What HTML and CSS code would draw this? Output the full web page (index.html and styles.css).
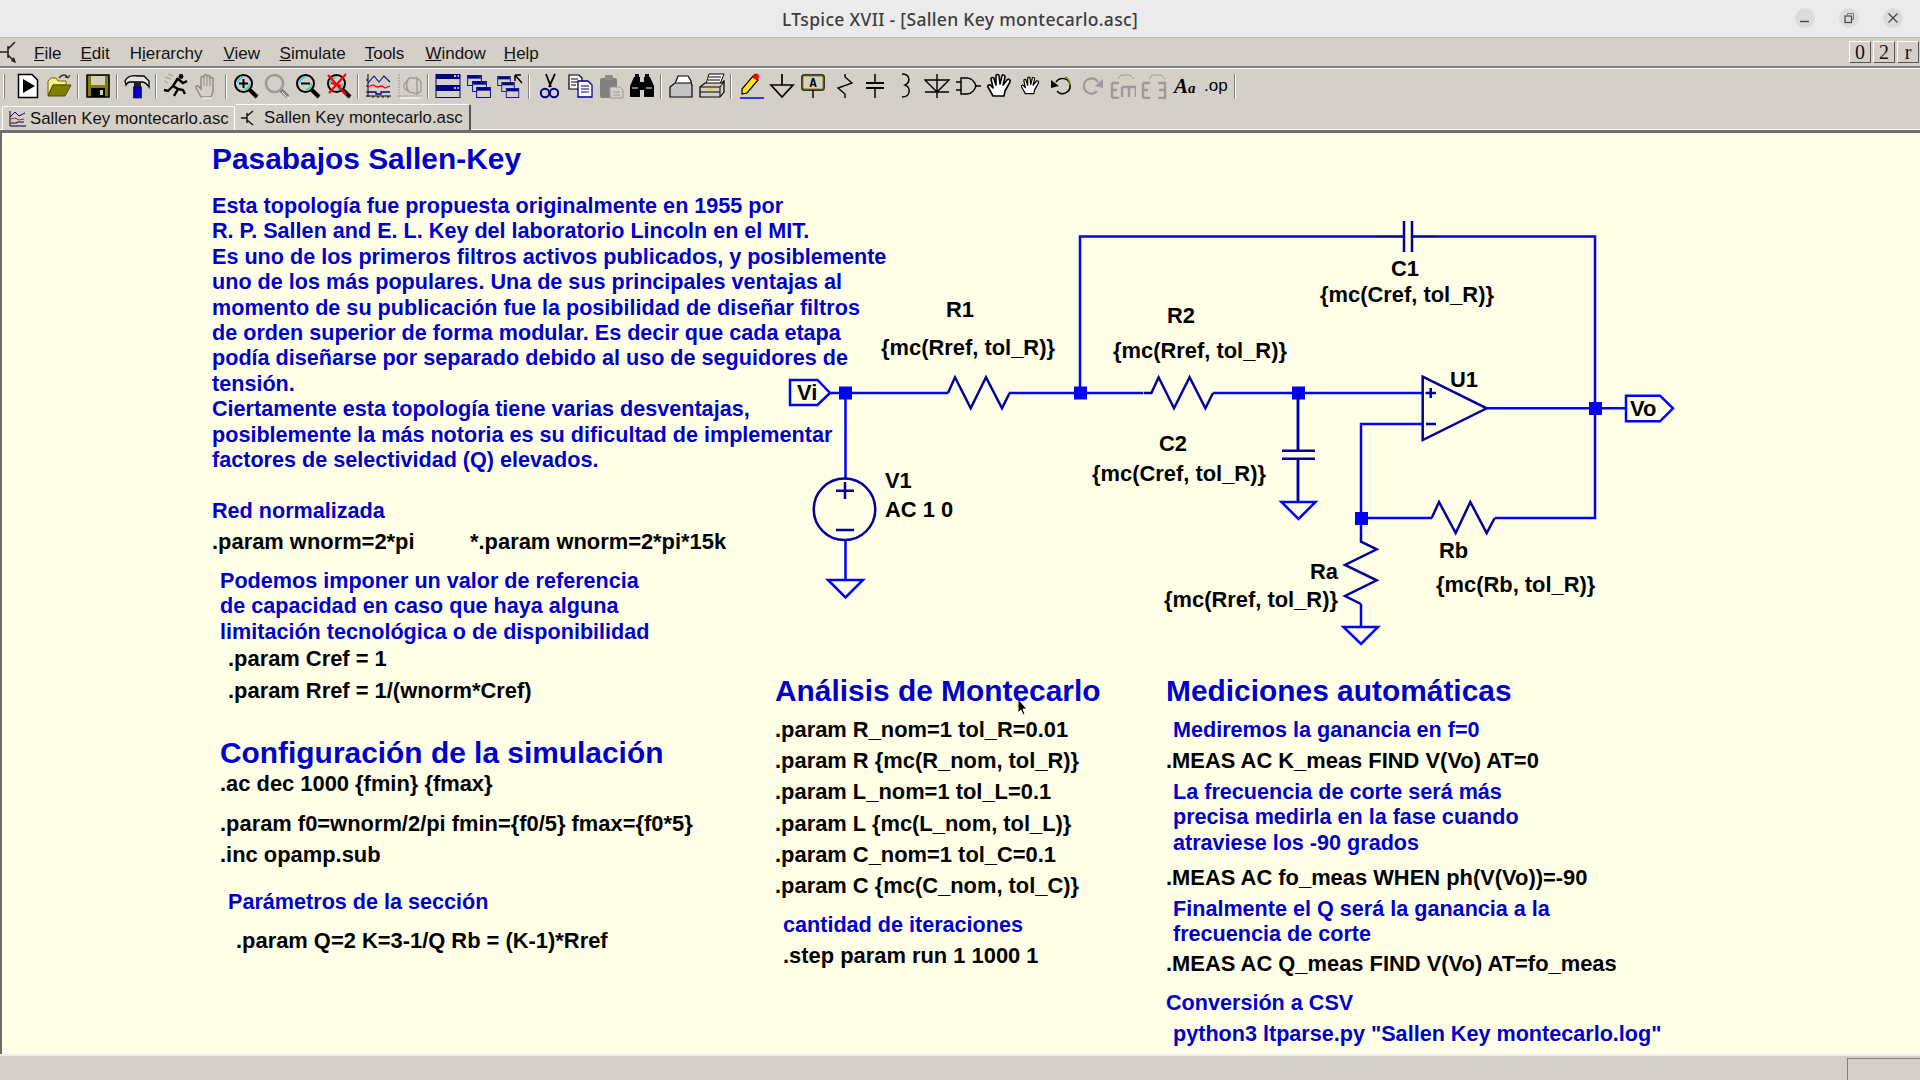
FILE: index.html
```html
<!DOCTYPE html>
<html lang="es">
<head>
    <meta charset="utf-8">
    <title>LTspice XVII - [Sallen Key montecarlo.asc]</title>
    <link rel="stylesheet" href="styles.css">
</head>
<body>
    <svg class="defs" width="0" height="0">
        <symbol id="lens" viewBox="0 0 26 26">
            <path d="M16 16 L24 24" stroke="#000" stroke-width="4"/>
            <circle cx="10.5" cy="10.5" r="8.5" fill="#d4d0c8" stroke="#000" stroke-width="2"/>
            <path d="M4 9 A7 7 0 0 1 9 4 L11 5 A6 6 0 0 0 5 11 Z" fill="#00e0e0"/>
            <path d="M17 10 A7 7 0 0 1 12 17 L10 16 A6 6 0 0 0 16 10 Z" fill="#00e0e0"/>
        </symbol>
        <symbol id="lens-off" viewBox="0 0 26 26">
            <path d="M16 16 L24 24" stroke="#808080" stroke-width="4"/>
            <circle cx="10.5" cy="10.5" r="8.5" fill="#d4d0c8" stroke="#9a9a9a" stroke-width="2.5"/>
            <path d="M18 19 L25 26" stroke="#fff" stroke-width="1"/>
        </symbol>
        <symbol id="win" viewBox="0 0 16 12">
            <rect x=".5" y=".5" width="15" height="11" fill="#d4d0c8" stroke="#000080"/>
            <rect x="1" y="1" width="14" height="3" fill="#000080"/>
        </symbol>
        <symbol id="hand" viewBox="0 0 26 26">
            <path d="M7 23 L2 14 C1 12 4 11 5 13 L7 15 L5 6 C5 4 8 4 8 6 L10 12 L10 3 C10 1 13 1 13 3 L14 11 L16 3 C16 1 19 2 19 4 L17 12 L21 7 C22 5 25 7 24 9 L19 18 L18 23 Z" fill="#fff" stroke="#000" stroke-width="1.6" stroke-linejoin="round"/>
        </symbol>
    </svg>

    <header class="titlebar">
        <span class="title">LTspice XVII - [Sallen Key montecarlo.asc]</span>
        <div class="wincontrols">
            <span class="winbtn"><svg width="20" height="20"><path d="M5 13.5 H14" stroke="#444" stroke-width="1.4"/></svg></span>
            <span class="winbtn"><svg width="20" height="20"><rect x="6" y="8" width="6.5" height="6.5" fill="none" stroke="#444" stroke-width="1.2"/><path d="M8.5 8 V5.5 H14.5 V11.5 H12.5" fill="none" stroke="#777"/></svg></span>
            <span class="winbtn"><svg width="20" height="20"><path d="M5.5 5.5 L14.5 14.5 M14.5 5.5 L5.5 14.5" stroke="#444" stroke-width="1.3"/></svg></span>
        </div>
    </header>

    <nav class="menubar">
        <svg class="appicon" width="17" height="24" viewBox="0 0 17 24">
            <path d="M0 12 H8 M8 6 V18 M8 9 L15 2 M8 15 L15 22" stroke="#222" stroke-width="1.6" fill="none"/>
            <path d="M11 21 L16 23 L14 17 Z" fill="#222"/>
        </svg>
        <a class="menu m-file"><u>F</u>ile</a>
        <a class="menu m-edit"><u>E</u>dit</a>
        <a class="menu m-hier">H<u>i</u>erarchy</a>
        <a class="menu m-view"><u>V</u>iew</a>
        <a class="menu m-sim"><u>S</u>imulate</a>
        <a class="menu m-tools"><u>T</u>ools</a>
        <a class="menu m-win"><u>W</u>indow</a>
        <a class="menu m-help"><u>H</u>elp</a>
        <div class="mdibtns">
            <span class="mdibtn">0</span>
            <span class="mdibtn">2</span>
            <span class="mdibtn">r</span>
        </div>
    </nav>

    <section class="toolarea">
        <div class="toolbar">
            <span class="grip"></span>
            <span class="tool"><svg viewBox="0 0 26 26"><path d="M3.5 1.5 H17 L22.5 7 V24.5 H3.5 Z" fill="#fff" stroke="#000" stroke-width="1.5"/><path d="M8 6 L20 13 L8 20 Z" fill="#000"/></svg></span>
            <span class="tool"><svg viewBox="0 0 26 26"><path d="M2 22 V8 L5 5 H10 L12 8 H20 V12 H7 Z" fill="#fff080" stroke="#6b6b00"/><path d="M2 23 L7 12 H25 L19 23 Z" fill="#808000" stroke="#4a4a00"/><path d="M13 5 C16 1 20 1 22 5 M22 5 L24 2 M22 5 L19 4" fill="none" stroke="#333" stroke-width="1.3"/></svg></span>
            <span class="sep"></span>
            <span class="tool"><svg viewBox="0 0 26 26"><path d="M2 2 H24 V24 H2 Z" fill="#808000" stroke="#000" stroke-width="1.6"/><rect x="6" y="3" width="14" height="9" fill="#d4d0c8"/><rect x="6" y="15" width="14" height="9" fill="#000"/><rect x="15" y="17" width="3" height="5" fill="#d4d0c8"/></svg></span>
            <span class="sep"></span>
            <span class="tool"><svg viewBox="0 0 26 26"><path d="M1 8 C3 3 9 2 14 3 H20 L25 8 V14 C23 11 21 9 18 9 H6 C4 9 3 10 2 12 Z" fill="#e4e4e4" stroke="#000" stroke-width="1.3"/><path d="M10 9 H17 V14 H10 Z" fill="#222"/><rect x="9.5" y="14" width="8" height="11" fill="#0000c8" stroke="#000" stroke-width=".6"/></svg></span>
            <span class="sep"></span>
            <span class="tool"><svg viewBox="0 0 26 26"><path d="M15 5 L10 13 L15 16 L11 23 M10 13 L5 18 L1 17 M15 6 L20 10 L24 8 M15 16 L20 17 L22 21" fill="none" stroke="#000" stroke-width="2.4"/><circle cx="18" cy="3.5" r="2.4" fill="#000"/><path d="M2 4 L8 6 M5 1 L10 3 M1 8 L5 10" stroke="#999" stroke-width="1"/></svg></span>
            <span class="tool off"><svg viewBox="0 0 26 26"><path d="M7 24 L2 15 C1 13 4 12 5 14 L7 16 V5 C7 3 10 3 10 5 V3 C10 1 13 1 13 3 V4 C13 2 16 2 16 4 V6 C16 4 19 4 19 6 V19 L17 24 Z" fill="#d4d0c8" stroke="#8c8c8c" stroke-width="1.5"/><path d="M10 5 V13 M13 4 V13 M16 5 V13" stroke="#8c8c8c"/><path d="M8 25 H18" stroke="#fff" stroke-width="1"/></svg></span>
            <span class="sep"></span>
            <span class="tool"><svg viewBox="0 0 26 26"><use href="#lens"/><path d="M10.5 6 V15 M6 10.5 H15" stroke="#000" stroke-width="2"/></svg></span>
            <span class="tool"><svg viewBox="0 0 26 26"><use href="#lens-off"/></svg></span>
            <span class="tool"><svg viewBox="0 0 26 26"><use href="#lens"/><path d="M6 10.5 H15" stroke="#000" stroke-width="2"/></svg></span>
            <span class="tool"><svg viewBox="0 0 26 26"><use href="#lens"/><path d="M2 2 L20 22 M20 1 L3 20 M5 10 L15 13" stroke="#f00" stroke-width="2.2"/></svg></span>
            <span class="sep"></span>
            <span class="tool"><svg viewBox="0 0 26 26"><path d="M3 1 V24 M1 23 H26 M3 19 H1 M3 13 H1 M3 7 H1 M8 25 V23 M13 25 V23 M18 25 V23 M23 25 V23" stroke="#000" fill="none"/><path d="M3 10 L9 3 L14 9 L19 3 L25 9" fill="none" stroke="#000080" stroke-width="1.1"/><path d="M3 14 L8 12 L12 14 L17 13 L20 15 L25 13" fill="none" stroke="#f00" stroke-width="1.3"/><path d="M3 19 H11 V21 H16 V19 H25" fill="none" stroke="#000080" stroke-width="1.3"/></svg></span>
            <span class="tool off"><svg viewBox="0 0 26 26"><path d="M3 1 V24 M1 23 H26" stroke="#999" fill="none" stroke-dasharray="2 1"/><path d="M8 12 L13 5 H21 L25 9 V18 L21 21 L13 19 L8 15 Z M13 5 C10 10 10 15 13 19 M21 5 V21" fill="none" stroke="#9a9a9a" stroke-width="1.3"/><path d="M4 25 H25" stroke="#fff"/></svg></span>
            <span class="sep"></span>
            <span class="tool"><svg viewBox="0 0 26 26"><rect x="1" y="1.5" width="24" height="11" fill="#d4d0c8" stroke="#000080"/><rect x="1" y="13.5" width="24" height="11" fill="#d4d0c8" stroke="#000080"/><rect x="1" y="2" width="24" height="4" fill="#000080"/><rect x="1" y="14" width="24" height="4" fill="#000080"/><path d="M19 3 H21 M22.5 3 H24 M19 15 H21 M22.5 15 H24" stroke="#fff" stroke-width="1.5"/></svg></span>
            <span class="tool"><svg viewBox="0 0 26 26"><use href="#win" x="1" y="2" width="15" height="11"/><use href="#win" x="6" y="8" width="15" height="11"/><use href="#win" x="10" y="14" width="15" height="11"/><path d="M13 4 H15 M18 10 H20" stroke="#a000a0"/></svg></span>
            <span class="tool"><svg viewBox="0 0 26 26"><use href="#win" x="0" y="3" width="14" height="10"/><use href="#win" x="4" y="9" width="14" height="10"/><use href="#win" x="8" y="15" width="15" height="10"/><path d="M18 2 H24 M18 2 V8 M18 2 L25 10" stroke="#000" stroke-width="1.5" fill="none"/></svg></span>
            <span class="sep"></span>
            <span class="tool"><svg viewBox="0 0 26 26"><path d="M10 1 L15 14 M19 1 L13 14" stroke="#000" stroke-width="1.8"/><circle cx="9" cy="20" r="4.2" fill="none" stroke="#000080" stroke-width="2"/><circle cx="18" cy="20" r="4.2" fill="none" stroke="#000080" stroke-width="2"/></svg></span>
            <span class="tool"><svg viewBox="0 0 26 26"><path d="M2 2 H12 L15 5 V16 H2 Z" fill="#fff" stroke="#000" stroke-width="1.2"/><path d="M4 6 H11 M4 9 H11 M4 12 H9" stroke="#000"/><path d="M11 8 H21 L25 12 V24 H11 Z" fill="#fff" stroke="#000080" stroke-width="1.3"/><path d="M14 13 H22 M14 16 H22 M14 19 H22" stroke="#000080"/></svg></span>
            <span class="tool off"><svg viewBox="0 0 26 26"><rect x="2" y="5" width="17" height="20" rx="2" fill="#808080"/><rect x="7" y="2" width="8" height="5" rx="1" fill="#8c8c8c"/><path d="M12 14 H22 L25 17 V25 H12 Z" fill="#d4d0c8" stroke="#9a9a9a"/><path d="M15 19 H22 M15 22 H22" stroke="#9a9a9a"/></svg></span>
            <span class="tool"><svg viewBox="0 0 26 26"><path d="M1 24 V13 L5 4 H11 V24 Z M15 24 V4 H21 L25 13 V24 Z M11 9 H15 V17 H11 Z" fill="#000"/><path d="M6 1 H10 V4 H6 Z M16 1 H20 V4 H16 Z" fill="#000"/><path d="M3 15 H9 M17 15 H23" stroke="#fff"/></svg></span>
            <span class="sep"></span>
            <span class="tool"><svg viewBox="0 0 26 26"><path d="M7 11 L10 3 H20 L23 8 V11 Z" fill="#fff" stroke="#000" stroke-width="1.2"/><path d="M2 14 L7 10 H23 L24 12 V24 H2 Z" fill="#c4c4c4" stroke="#000" stroke-width="1.2"/></svg></span>
            <span class="tool"><svg viewBox="0 0 26 26"><path d="M7 11 L10 1 H25 L21 11 Z" fill="#fff" stroke="#000"/><path d="M10 4 H22 M9 7 H21" stroke="#000" stroke-width="1.2"/><path d="M1 14 L6 10 H23 L25 8 V19 L21 24 H1 Z" fill="#d4d0c8" stroke="#000" stroke-width="1.2"/><path d="M1 14 H21 V24 M21 14 L25 9 M1 19 H21" stroke="#000" fill="none"/><rect x="9" y="15.5" width="5" height="1.5" fill="#e8d000"/></svg></span>
            <span class="sep"></span>
            <span class="tool"><svg viewBox="0 0 26 26"><path d="M2 25 H26" stroke="#0000ff" stroke-width="1.5"/><path d="M4 21 L4 16 L15 3 L20 7 L9 20 Z" fill="#ffe800" stroke="#000" stroke-width="1.2"/><circle cx="18" cy="3.5" r="3" fill="#f00"/></svg></span>
            <span class="tool"><svg viewBox="0 0 26 26"><path d="M13 1 V12 M2 12 H24 L13 24 Z" fill="none" stroke="#000" stroke-width="1.7"/></svg></span>
            <span class="tool"><svg viewBox="0 0 26 26"><rect x="2" y="2" width="22" height="15" rx="2" fill="none" stroke="#000" stroke-width="1.5"/><rect x="3" y="3" width="20" height="13" fill="none" stroke="#808000" stroke-width="1"/><text class="iconlabel" x="13" y="14">A</text><path d="M13 17 V25" stroke="#000" stroke-width="1.4"/></svg></span>
            <span class="tool"><svg viewBox="0 0 26 26"><path d="M14 1 V4 L21 10 L7 15 L14 21 V25" fill="none" stroke="#000" stroke-width="1.4"/></svg></span>
            <span class="tool"><svg viewBox="0 0 26 26"><path d="M13 1 V10 M13 15 V25" stroke="#000" stroke-width="1.5"/><path d="M4 10 H22 M4 15 H22" stroke="#000" stroke-width="2.2"/></svg></span>
            <span class="tool"><svg viewBox="0 0 26 26"><path d="M9 1 C17 1 18 9 12 12 C18 14 18 24 9 24" fill="none" stroke="#000" stroke-width="1.5"/></svg></span>
            <span class="tool"><svg viewBox="0 0 26 26"><path d="M13 1 V25 M1 7 H25 L13 19 Z M1 19 H25" fill="none" stroke="#000" stroke-width="1.4"/></svg></span>
            <span class="tool"><svg viewBox="0 0 26 26"><path d="M1 9 H6 M1 17 H6 M6 5 V21 H12 C17 21 20 16 21 13 C20 10 17 5 12 5 Z M21 13 H26" fill="none" stroke="#000" stroke-width="1.5"/></svg></span>
            <span class="tool"><svg viewBox="0 0 26 26"><use href="#hand"/></svg></span>
            <span class="tool"><svg viewBox="0 0 26 26"><use href="#hand" x="3" y="3" width="20" height="20"/></svg></span>
            <span class="tool"><svg viewBox="0 0 26 26"><path d="M8 9 C12 3 21 5 22 12 C23 19 14 24 9 18" fill="none" stroke="#000" stroke-width="1.5"/><path d="M17 4 C20 5 22 9 22 12" fill="none" stroke="#808000" stroke-width="1.5"/><path d="M3 7 L11 13 L3 15 Z" fill="#000"/></svg></span>
            <span class="tool off"><svg viewBox="0 0 26 26"><path d="M19 9 C15 3 6 5 5 12 C4 19 13 24 18 18" fill="none" stroke="#9a9a9a" stroke-width="2.2"/><path d="M24 6 L16 13 L24 15 Z" fill="#9a9a9a"/></svg></span>
            <span class="tool off"><svg viewBox="0 0 26 26"><path d="M8 6 L11 2 H20 L24 6" fill="none" stroke="#9a9a9a"/><path d="M2 10 H9 M2 10 V25 M2 17 H7 M2 25 H9 M12 14 H26 M12 14 V24 M19 14 V24 M26 14 V24" stroke="#9a9a9a" stroke-width="2.4" fill="none"/></svg></span>
            <span class="tool off"><svg viewBox="0 0 26 26"><path d="M8 6 L11 2 H20 L24 6" fill="none" stroke="#9a9a9a"/><path d="M2 10 H9 M2 10 V25 M2 17 H7 M2 25 H9 M17 10 H24 V25 H17 M18 17 H24" stroke="#9a9a9a" stroke-width="2.4" fill="none"/></svg></span>
            <span class="tool"><svg viewBox="0 0 26 26"><text class="iconfont" x="2" y="20">A<tspan class="iconfont-small">a</tspan></text></svg></span>
            <span class="tool"><svg viewBox="0 0 26 26"><text class="iconop" x="1" y="18">.op</text></svg></span>
            <span class="sep"></span>
        </div>
        <div class="tabs">
            <div class="tab tab-plot">
                <svg class="tabicon" width="17" height="17" viewBox="0 0 17 17"><path d="M1 1 V16 H17" fill="none" stroke="#000"/><path d="M1 7 L6 2 L10 6 L16 3" fill="none" stroke="#000080"/><path d="M2 9 L6 8 L10 10 L15 9" fill="none" stroke="#f00"/><path d="M2 13 H8 V12 H15" fill="none" stroke="#000080"/></svg>
                <span>Sallen Key montecarlo.asc</span>
            </div>
            <div class="tab tab-sch">
                <svg class="tabicon" width="17" height="17" viewBox="0 0 17 17"><path d="M1 9 H7 M7 4 V14 M7 7 L13 2 M7 11 L13 16" fill="none" stroke="#111" stroke-width="1.4"/></svg>
                <span>Sallen Key montecarlo.asc</span>
            </div>
        </div>
    </section>

    <main class="canvas">
        <svg class="schematic" width="1920" height="921" viewBox="0 133 1920 921">
            <g class="wire">
                <path d="M830 393 H948 M1009 393 H1143 M1213 393 H1422 M845.5 393 V479 M845.5 540 V580"/>
                <path d="M1080 393 V236.5 H1377 M1437 236.5 H1595 V518 H1495 M1432 518 H1361 V424 H1422"/>
                <path d="M1298 393 V451 M1298 459 V502"/>
                <path d="M1487 408.3 H1626 M1361 518 V534 M1361 604 V627"/>
                <path d="M790 380 H817.5 L830 393 L817.5 405 H790 Z"/>
                <path d="M1626 395.7 H1660 L1673 408.3 L1660 421.3 H1626 Z"/>
                <path d="M828 580 H863 L845.5 597.5 Z"/>
                <path d="M1281.5 502 H1315.5 L1298.5 519 Z"/>
                <path d="M1343.5 627 H1378 L1361 644 Z"/>
            </g>
            <g class="junctions">
                <rect x="839" y="386.5" width="13" height="13"/>
                <rect x="1074" y="386.5" width="13" height="13"/>
                <rect x="1292" y="386.5" width="13" height="13"/>
                <rect x="1355" y="512" width="13" height="13"/>
                <rect x="1589" y="402" width="13" height="13"/>
            </g>
            <g class="part">
                <path d="M948 393 L955 377.3 L970.7 408.3 L986 377.3 L1002 408.3 L1009.6 393"/>
                <path d="M1143.6 393 H1151.4 L1158.6 377.3 L1174 408.3 L1189.6 377.3 L1205.4 408.3 L1213 393"/>
                <path d="M1431.7 518 L1439 502 L1455.7 533 L1470.3 502 L1486.7 533 L1494.7 518"/>
                <path d="M1361 534 V541.7 L1376.7 549.3 L1345 565 L1376.7 580.3 L1345 596 L1361 604"/>
                <path d="M1298 393 V451 M1298 459 V502"/>
                <path d="M1282 450.7 H1315 M1282 458.7 H1315"/>
                <path d="M1404 221 V252 M1412 221 V252 M1377 236.5 H1404 M1412 236.5 H1437"/>
                <path d="M1422.7 376.7 L1486.7 408.3 L1422.7 440 Z"/>
                <path d="M1425.5 393 H1436 M1430.7 388 V398 M1426 424 H1436"/>
                <circle cx="844.5" cy="509.3" r="30.8"/>
                <path d="M836 490.7 H854 M845 482 V499 M836 530 H854"/>
            </g>
            <path class="cursor" d="M1018 699 V713 L1021 710 L1023 715 L1025 714 L1023 709 L1027 709 Z"/>
        </svg>

        <h1 class="heading blue n-title">Pasabajos Sallen-Key</h1>
        <p class="note blue n-intro">Esta topología fue propuesta originalmente en 1955 por<br>R. P. Sallen and E. L. Key del laboratorio Lincoln en el MIT.<br>Es uno de los primeros filtros activos publicados, y posiblemente<br>uno de los más populares. Una de sus principales ventajas al<br>momento de su publicación fue la posibilidad de diseñar filtros<br>de orden superior de forma modular. Es decir que cada etapa<br>podía diseñarse por separado debido al uso de seguidores de<br>tensión.<br>Ciertamente esta topología tiene varias desventajas,<br>posiblemente la más notoria es su dificultad de implementar<br>factores de selectividad (Q) elevados.</p>
        <p class="note blue n-red">Red normalizada</p>
        <p class="note n-wnorm">.param wnorm=2*pi</p>
        <p class="note n-wnorm2">*.param wnorm=2*pi*15k</p>
        <p class="note blue n-imponer">Podemos imponer un valor de referencia<br>de capacidad en caso que haya alguna<br>limitación tecnológica o de disponibilidad</p>
        <p class="note n-cref">.param Cref = 1</p>
        <p class="note n-rref">.param Rref = 1/(wnorm*Cref)</p>
        <h2 class="heading blue n-config">Configuración de la simulación</h2>
        <p class="note n-ac">.ac dec 1000 {fmin} {fmax}</p>
        <p class="note n-f0">.param f0=wnorm/2/pi fmin={f0/5} fmax={f0*5}</p>
        <p class="note n-inc">.inc opamp.sub</p>
        <p class="note blue n-seccion">Parámetros de la sección</p>
        <p class="note n-q">.param Q=2 K=3-1/Q Rb = (K-1)*Rref</p>

        <h2 class="heading blue n-mc">Análisis de Montecarlo</h2>
        <p class="note n-p1">.param R_nom=1 tol_R=0.01</p>
        <p class="note n-p2">.param R {mc(R_nom, tol_R)}</p>
        <p class="note n-p3">.param L_nom=1 tol_L=0.1</p>
        <p class="note n-p4">.param L {mc(L_nom, tol_L)}</p>
        <p class="note n-p5">.param C_nom=1 tol_C=0.1</p>
        <p class="note n-p6">.param C {mc(C_nom, tol_C)}</p>
        <p class="note blue n-iter">cantidad de iteraciones</p>
        <p class="note n-step">.step param run 1 1000 1</p>

        <h2 class="heading blue n-med">Mediciones automáticas</h2>
        <p class="note blue n-m1">Mediremos la ganancia en f=0</p>
        <p class="note n-m2">.MEAS AC K_meas FIND V(Vo) AT=0</p>
        <p class="note blue n-m3">La frecuencia de corte será más<br>precisa medirla en la fase cuando<br>atraviese los -90 grados</p>
        <p class="note n-m4">.MEAS AC fo_meas WHEN ph(V(Vo))=-90</p>
        <p class="note blue n-m5">Finalmente el Q será la ganancia a la<br>frecuencia de corte</p>
        <p class="note n-m6">.MEAS AC Q_meas FIND V(Vo) AT=fo_meas</p>
        <p class="note blue n-m7">Conversión a CSV</p>
        <p class="note blue n-m8">python3 ltparse.py "Sallen Key montecarlo.log"</p>

        <span class="note l-r1">R1</span>
        <span class="note l-r1v">{mc(Rref, tol_R)}</span>
        <span class="note l-r2">R2</span>
        <span class="note l-r2v">{mc(Rref, tol_R)}</span>
        <span class="note l-c1">C1</span>
        <span class="note l-c1v">{mc(Cref, tol_R)}</span>
        <span class="note l-c2">C2</span>
        <span class="note l-c2v">{mc(Cref, tol_R)}</span>
        <span class="note l-v1">V1</span>
        <span class="note l-v1v">AC 1 0</span>
        <span class="note l-u1">U1</span>
        <span class="note l-ra">Ra</span>
        <span class="note l-rav">{mc(Rref, tol_R)}</span>
        <span class="note l-rb">Rb</span>
        <span class="note l-rbv">{mc(Rb, tol_R)}</span>
        <span class="note l-vi">Vi</span>
        <span class="note l-vo">Vo</span>
    </main>

    <footer class="statusbar">
        <span class="statuspanel"></span>
    </footer>
</body>
</html>
```

FILE: styles.css
```css
* {
    box-sizing: border-box;
}

html, body {
    margin: 0;
    height: 100%;
}

body {
    display: flex;
    flex-direction: column;
    height: 1080px;
    overflow: hidden;
    background: #d4d0c8;
    font-family: "Liberation Sans", Arial, sans-serif;
}

.defs {
    position: absolute;
}

/* window title */
.titlebar {
    height: 38px;
    flex: none;
    display: flex;
    align-items: center;
    justify-content: center;
    position: relative;
    background: #ebebeb;
    border-bottom: 1px solid #bdbdbd;
}

.title {
    font-family: "Noto Sans", sans-serif;
    font-size: 17.5px;
    font-weight: 500;
    letter-spacing: .32px;
    color: #3d3d3d;
}

.wincontrols {
    position: absolute;
    right: 17px;
    top: 8px;
    display: flex;
    gap: 24px;
}

.winbtn {
    width: 20px;
    height: 20px;
    border-radius: 50%;
    background: #dcdcdc;
}

.winbtn svg {
    display: block;
}

/* menu */
.menubar {
    height: 30px;
    flex: none;
    display: flex;
    align-items: center;
    background: #d4d0c8;
    border-bottom: 2px solid #808080;
    font-size: 17px;
    color: #111;
}

.appicon {
    flex: none;
}

.menu {
    padding-top: 3px;
    white-space: nowrap;
}

.m-file { margin-left: 17px; }
.m-edit { margin-left: 19px; }
.m-hier { margin-left: 20px; }
.m-view { margin-left: 21px; }
.m-sim { margin-left: 19.5px; }
.m-tools { margin-left: 19px; }
.m-win { margin-left: 21px; }
.m-help { margin-left: 18px; }

.mdibtns {
    margin-left: auto;
    margin-right: 1px;
    display: flex;
    gap: 2px;
}

.mdibtn {
    width: 22px;
    height: 22px;
    font-family: "Liberation Serif", serif;
    font-size: 20px;
    line-height: 20px;
    text-align: center;
    background: #d4d0c8;
    border: 1px solid;
    border-color: #fff #555 #555 #fff;
}

/* toolbar and tabs */
.toolarea {
    height: 65px;
    flex: none;
    display: flex;
    flex-direction: column;
    border-top: 1px solid #fff;
    border-bottom: 3px solid;
    border-bottom-color: #6e6e6e;
    box-shadow: inset 0 -1px 0 #fff;
}

.toolbar {
    height: 36px;
    display: flex;
    align-items: center;
    padding: 0 0 2px 3px;
}

.grip {
    width: 9px;
    height: 25px;
    border-left: 1px solid #fff;
    box-shadow: inset 1px 0 0 #808080;
}

.tool {
    width: 31px;
    height: 26px;
    display: flex;
    justify-content: center;
}

.tool svg {
    width: 26px;
    height: 26px;
}

.sep {
    width: 8px;
    height: 25px;
    flex: none;
    position: relative;
}

.sep::before {
    content: "";
    position: absolute;
    left: 3px;
    top: 0;
    bottom: 0;
    width: 2px;
    background: linear-gradient(90deg, #808080 50%, #fff 50%);
}

.iconlabel {
    font-family: "Liberation Mono", monospace;
    font-size: 12px;
    font-weight: bold;
    text-anchor: middle;
}

.iconfont {
    font-family: "Liberation Serif", serif;
    font-size: 21px;
    font-style: italic;
    font-weight: bold;
}

.iconfont-small {
    font-size: 15px;
}

.iconop {
    font-family: "Liberation Sans", sans-serif;
    font-size: 17px;
}

.tabs {
    height: 25px;
    display: flex;
    align-items: flex-end;
    padding-left: 2px;
    font-size: 16.8px;
    color: #111;
}

.tab {
    display: flex;
    align-items: center;
    white-space: nowrap;
    background: #d4d0c8;
}

.tab-plot {
    width: 233px;
    height: 24px;
    padding-left: 6px;
    gap: 4px;
    border: 1px solid #fff;
    border-bottom: none;
    border-radius: 2px 2px 0 0;
}

.tab-sch {
    width: 236px;
    height: 26px;
    padding-left: 5px;
    gap: 7px;
    border-top: 1px solid #fff;
    border-right: 2px solid #555;
    border-radius: 2px 2px 0 0;
}

.tabicon {
    flex: none;
}

/* schematic sheet */
.canvas {
    position: relative;
    flex: 1;
    overflow: hidden;
    background: #ffffe7;
    box-shadow: inset 2px 0 0 #6a6a6a;
    border-bottom: 2px solid #f0f0f0;
}

.schematic {
    position: absolute;
    left: 0;
    top: 0;
}

.wire path,
.part path,
.part circle {
    fill: none;
    stroke-width: 2.5;
}

.wire path {
    stroke: #0000ff;
}

.part path,
.part circle {
    stroke: #00009c;
}

.junctions rect {
    fill: #0000ff;
}

.cursor {
    fill: #000;
    stroke: #fff;
    stroke-width: 1;
}

.note,
.heading {
    position: absolute;
    margin: 0;
    white-space: nowrap;
    font-weight: bold;
}

.note {
    font-size: 21.9px;
    line-height: 25.4px;
    color: #000;
}

.heading {
    font-size: 29.9px;
    line-height: 34px;
}

.blue {
    color: #0000cc;
}

.note.blue {
    font-size: 21.6px;
}

/* left column */
.n-title { left: 212px; top: 9px; }
.n-intro { left: 212px; top: 60px; }
.n-red { left: 212px; top: 365px; }
.n-wnorm { left: 212px; top: 396px; }
.n-wnorm2 { left: 470px; top: 396px; }
.n-imponer { left: 220px; top: 435px; }
.n-cref { left: 228px; top: 513px; }
.n-rref { left: 228px; top: 545px; }
.n-config { left: 220px; top: 603px; }
.n-ac { left: 220px; top: 638px; }
.n-f0 { left: 220px; top: 678px; }
.n-inc { left: 220px; top: 709px; }
.n-seccion { left: 228px; top: 756px; }
.n-q { left: 236px; top: 795px; }

/* middle column */
.n-mc { left: 775px; top: 541px; }
.n-p1 { left: 775px; top: 584px; }
.n-p2 { left: 775px; top: 615px; }
.n-p3 { left: 775px; top: 646px; }
.n-p4 { left: 775px; top: 678px; }
.n-p5 { left: 775px; top: 709px; }
.n-p6 { left: 775px; top: 740px; }
.n-iter { left: 783px; top: 779px; }
.n-step { left: 783px; top: 810px; }

/* right column */
.n-med { left: 1166px; top: 541px; }
.n-m1 { left: 1173px; top: 584px; }
.n-m2 { left: 1166px; top: 615px; }
.n-m3 { left: 1173px; top: 646px; }
.n-m4 { left: 1166px; top: 732px; }
.n-m5 { left: 1173px; top: 763px; }
.n-m6 { left: 1166px; top: 818px; }
.n-m7 { left: 1166px; top: 857px; }
.n-m8 { left: 1173px; top: 888px; }

/* component labels */
.l-r1 { left: 946px; top: 164px; }
.l-r1v { left: 881px; top: 202px; }
.l-r2 { left: 1167px; top: 170px; }
.l-r2v { left: 1113px; top: 205px; }
.l-c1 { left: 1391px; top: 123px; }
.l-c1v { left: 1320px; top: 149px; }
.l-c2 { left: 1159px; top: 298px; }
.l-c2v { left: 1092px; top: 328px; }
.l-v1 { left: 885px; top: 335px; }
.l-v1v { left: 885px; top: 364px; }
.l-u1 { left: 1450px; top: 234px; }
.l-ra { left: 1310px; top: 426px; }
.l-rav { left: 1164px; top: 454px; }
.l-rb { left: 1439px; top: 405px; }
.l-rbv { left: 1436px; top: 439px; }
.l-vi { left: 797px; top: 247px; }
.l-vo { left: 1630px; top: 263px; }

.statusbar {
    height: 24px;
    flex: none;
    display: flex;
    justify-content: flex-end;
    align-items: flex-end;
    background: #d4d0c8;
}

.statuspanel {
    width: 73px;
    height: 22px;
    border-top: 1px solid #808080;
    border-left: 1px solid #808080;
}
```
